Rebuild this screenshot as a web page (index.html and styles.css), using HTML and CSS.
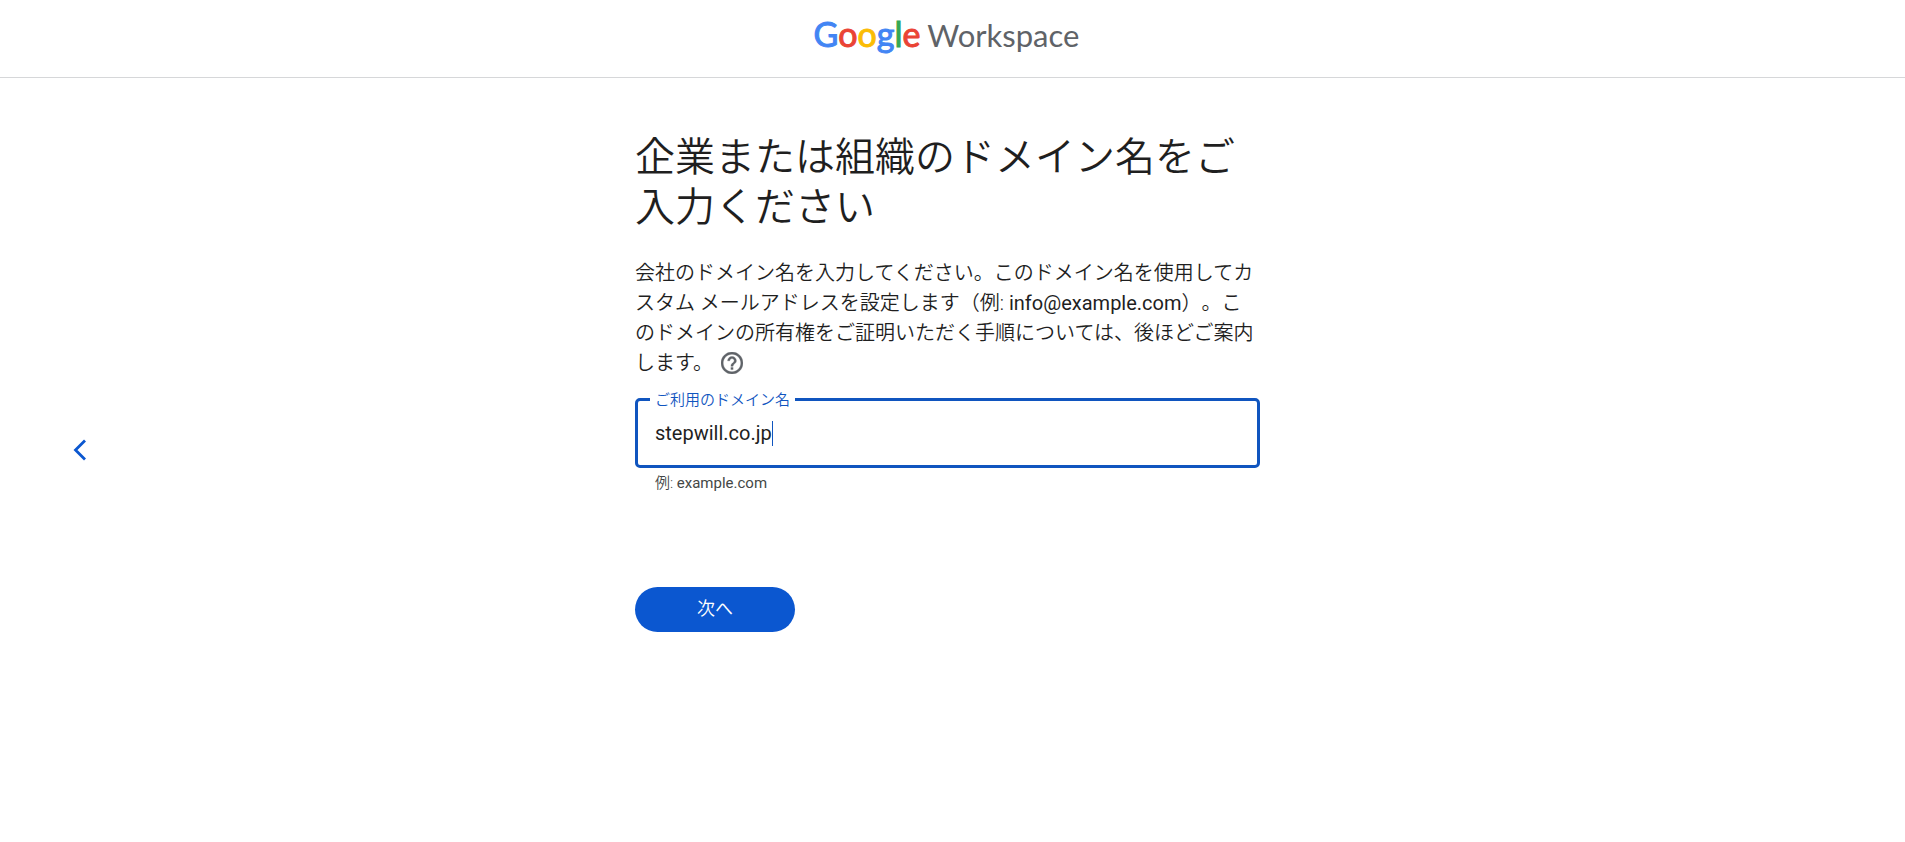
FILE: index.html
```html
<!DOCTYPE html>
<html lang="ja">
<head>
<meta charset="utf-8">
<meta name="viewport" content="width=device-width, initial-scale=1">
<title>Google Workspace</title>
<link rel="stylesheet" href="styles.css">
</head>
<body>
<header class="header">
  <div class="logo"><span class="logo-google"><span class="blue">G</span><span class="red">o</span><span class="yellow">o</span><span class="blue">g</span><span class="green">l</span><span class="red">e</span></span><span class="logo-product">Workspace</span></div>
</header>
<div class="page">
  <button class="back" type="button" aria-label="戻る">
    <svg width="30" height="30" viewBox="0 0 30 30" aria-hidden="true"><path d="M20 5.5 10.500 15l9.500 9.500" fill="none" stroke="#0b57d0" stroke-width="2.800"/></svg>
  </button>
  <main class="content">
    <h1 class="title">企業または組織のドメイン名をご入力ください</h1>
    <p class="intro">会社のドメイン名を入力してください。このドメイン名を使用してカスタム メールアドレスを設定します（例: <span class="latin">info@example.com</span>）。このドメインの所有権をご証明いただく手順については、後ほどご案内します。<button class="help" type="button" aria-label="ヘルプ"><svg width="22" height="22" viewBox="0 0 20 20" aria-hidden="true"><path fill="#5f6368" stroke="#5f6368" stroke-width=".3" d="M9 16h2v-2H9v2zm1-16C4.480 0 0 4.480 0 10s4.480 10 10 10 10-4.480 10-10S15.520 0 10 0zm0 18c-4.410 0-8-3.590-8-8s3.590-8 8-8 8 3.590 8 8-3.590 8-8 8zm0-14C7.790 4 6 5.790 6 8h2c0-1.100.9-2 2-2s2 .9 2 2c0 2-3 1.750-3 5h2c0-2.250 3-2.500 3-5 0-2.210-1.790-4-4-4z"/></svg></button></p>
    <form class="form">
      <div class="field">
        <label class="field-label" for="domain">ご利用のドメイン名</label>
        <input class="field-input" id="domain" type="text" value="stepwill.co.jp" size="1" spellcheck="false" aria-describedby="domain-hint">
        <span class="caret"></span>
      </div>
      <div class="hint" id="domain-hint">例: <span class="latin">example.com</span></div>
      <button class="next" type="button">次へ</button>
    </form>
  </main>
</div>
</body>
</html>
```
FILE: styles.css
```css
* {
  box-sizing: border-box;
}

body {
  margin: 0;
  background: #fff;
  color: #1f1f1f;
  font-family: Roboto, "Noto Sans CJK JP", sans-serif;
  font-weight: 350;
}

.header {
  display: flex;
  justify-content: center;
  align-items: center;
  height: 78px;
  padding: 0 12px 8px 0;
  border-bottom: 1px solid #d6d7d9;
}

.logo {
  display: flex;
  align-items: baseline;
  gap: 7px;
  font-family: Lato, sans-serif;
  font-weight: 400;
  font-size: 31px;
  line-height: 40px;
}

.logo-google {
  font-size: 34px;
  -webkit-text-stroke: 1px currentColor;
}

.logo-product {
  color: #5f6368;
}

.blue { color: #4285f4; }
.red { color: #ea4335; }
.yellow { color: #fbbc04; }
.green { color: #34a853; }

.page {
  display: grid;
  grid-template-columns: 1fr minmax(0, 625px) 1fr;
  padding: 55px 10px 40px 0;
}

.back {
  justify-self: start;
  align-self: start;
  margin: 302px 0 0 65px;
  width: 30px;
  height: 30px;
  padding: 0;
  border: 0;
  background: none;
}

.title {
  margin: 0 0 25px;
  font-weight: 350;
  font-size: 40px;
  line-height: 50px;
}

.intro {
  margin: 0;
  padding-right: 4px;
  font-size: 20px;
  line-height: 30px;
  text-spacing-trim: space-all;
}

.latin {
  font-weight: 400;
}

.help {
  display: inline-flex;
  margin: -4px 0 0 8px;
  padding: 0;
  border: 0;
  background: none;
  vertical-align: middle;
}

.field {
  position: relative;
  display: flex;
  align-items: center;
  height: 70px;
  margin-top: 20px;
  padding: 0 17px;
  border: 3px solid #1055bf;
  border-radius: 5px;
}

.field-label {
  position: absolute;
  top: -12px;
  left: 12px;
  padding: 0 5px;
  background: #fff;
  color: #1055bf;
  font-size: 15px;
  line-height: 22px;
}

.field-input {
  field-sizing: content;
  padding: 0;
  border: 0;
  outline: 0;
  background: none;
  color: #1f1f1f;
  font-family: inherit;
  font-weight: 400;
  font-size: 20px;
  line-height: 30px;
}

.caret {
  width: 1px;
  height: 25px;
  background: #1055bf;
}

.hint {
  margin: 4px 0 0 20px;
  color: #444746;
  font-size: 15px;
  line-height: 22px;
}

.next {
  display: block;
  width: 160px;
  height: 45px;
  margin-top: 93px;
  padding: 0 0 5px;
  border: 0;
  border-radius: 23px;
  background: #0b57d0;
  color: #fff;
  font-family: inherit;
  font-weight: 350;
  font-size: 18px;
}
```
